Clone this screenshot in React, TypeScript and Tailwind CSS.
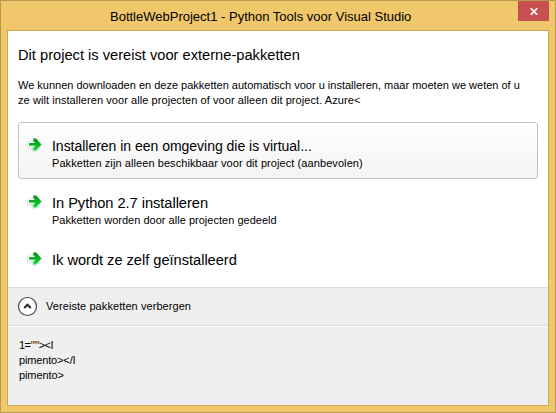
import type { ReactNode } from "react";

function Arrow() {
  return (
    <svg width="18" height="18" viewBox="0 0 18 18" className="mt-[13px] shrink-0">
      <defs>
        <linearGradient id="arrow" x1="0" y1="0" x2="0" y2="1">
          <stop offset="0" stopColor="#078a14" />
          <stop offset="0.45" stopColor="#0cae22" />
          <stop offset="1" stopColor="#08e63c" />
        </linearGradient>
        <filter id="soft" x="-30%" y="-30%" width="160%" height="160%">
          <feGaussianBlur stdDeviation="0.8" />
        </filter>
      </defs>
      <path d="M1 6h6L6.5 3l4-.5L15 8l-5 7.500-4-.5v-2.500L1 11z" fill="#bdb8c2" opacity="0.6" filter="url(#soft)" />
      <path d="M2 6.300h5.500V2.300H11L16 8l-5 6.500H7.200v-3.800H2z" fill="#fff" />
      <path d="M3 7h6L7.300 5V2.400h2.900l5.300 6-5.300 6H7.300v-2.500L9.200 9.800H3z" fill="url(#arrow)" />
    </svg>
  );
}

function Option({ children, selected = false }: { children: ReactNode; selected?: boolean }) {
  return (
    <button
      className={`flex h-[57px] w-full shrink-0 items-start rounded-[3px] border pl-[7px] text-left ${
        selected ? "border-[#c3c3c3] bg-linear-to-b from-white to-[#f3f3f3]" : "border-transparent"
      }`}
    >
      <Arrow />
      <span className="ml-2 flex flex-col pt-[13px]">{children}</span>
    </button>
  );
}

export default function App() {
  return (
    <div className="flex h-[413px] w-[556px] flex-col overflow-hidden border border-[#b8994f] bg-[#f0c76a] font-['Liberation_Sans',Arial,sans-serif] text-[11px] leading-[15px] whitespace-nowrap text-black">
      <header className="flex h-[29px] shrink-0 items-start pr-[6px] pl-[109px]">
        <h1 className="grow pt-[7px] text-[13px] leading-[18px]">
          BottleWebProject1 - Python Tools voor Visual Studio
        </h1>
        <button aria-label="Sluiten" className="flex h-5 w-[31px] items-center justify-center bg-[#c75050]">
          <svg width="8" height="7" viewBox="0 0 8 7" className="mt-px">
            <path d="M.7.2 7.3 6.8M7.3.2.7 6.8" stroke="#fff" strokeWidth="1.7" />
          </svg>
        </button>
      </header>
      <main className="mx-[6px] mb-[6px] flex grow flex-col border border-[#cda956] bg-white">
        <section className="flex h-[256px] shrink-0 flex-col px-[10px]">
          <h2 className="mt-[14px] text-[14.67px] leading-5">Dit project is vereist voor externe-pakketten</h2>
          <div className="mt-[13px] h-[44px] shrink-0">
            <p>We kunnen downloaden en deze pakketten automatisch voor u installeren, maar moeten we weten of u</p>
            <p className="tracking-[0.07px]">ze wilt installeren voor alle projecten of voor alleen dit project. Azure&lt;</p>
          </div>
          <Option selected>
            <span className="text-[14px] leading-5 tracking-[-0.02px]">Installeren in een omgeving die is virtual...</span>
            <span className="tracking-[0.08px]">Pakketten zijn alleen beschikbaar voor dit project (aanbevolen)</span>
          </Option>
          <Option>
            <span className="text-[14.67px] leading-5 tracking-[-0.05px]">In Python 2.7 installeren</span>
            <span className="tracking-[0.02px]">Pakketten worden door alle projecten gedeeld</span>
          </Option>
          <Option>
            <span className="text-[14.67px] leading-5 tracking-[-0.03px]">Ik wordt ze zelf geïnstalleerd</span>
          </Option>
        </section>
        <section className="flex h-[39px] shrink-0 items-center gap-2 border-y border-[#dcdcdc] bg-[#efefef] pl-[9px]">
          <svg width="21" height="21" viewBox="0 0 21 21">
            <circle cx="10.5" cy="10.5" r="9" fill="#fff" stroke="#444" strokeWidth="1.2" />
            <path d="m7.2 12 3.3-3.3 3.3 3.3" fill="none" stroke="#2b2b2b" strokeWidth="2.1" />
          </svg>
          <span className="tracking-[0.07px]">Vereiste pakketten verbergen</span>
        </section>
        <section className="grow border-t border-white bg-[#efefef] px-[11px] pt-[11px]">
          <p className="tracking-[-0.6px]">1=<span className="font-bold text-[#8a5a20] tracking-[-1px]">""</span>&gt;&lt;I</p>
          <p className="tracking-[-0.15px]">pimento&gt;&lt;/I</p>
          <p className="tracking-[-0.1px]">pimento&gt;</p>
        </section>
      </main>
    </div>
  );
}
